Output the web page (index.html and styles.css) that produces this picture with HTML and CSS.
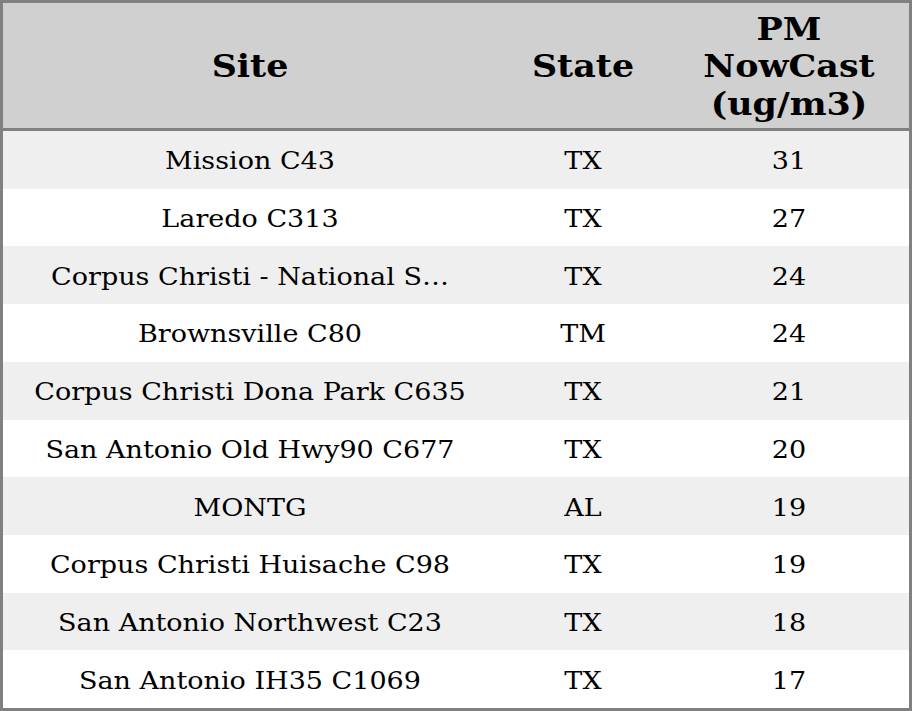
FILE: index.html
```html
<!DOCTYPE html>
<html>
<head>
<meta charset="utf-8">
<link rel="stylesheet" href="styles.css">
</head>
<body>
<div class="table">
  <div class="head">
    <div class="hcell">Site</div>
    <div class="hcell">State</div>
    <div class="hcell">PM<br>NowCast<br>(ug/m3)</div>
  </div>
  <div class="body">
    <div class="row"><div class="cell">Mission C43</div><div class="cell">TX</div><div class="cell">31</div></div>
    <div class="row"><div class="cell">Laredo C313</div><div class="cell">TX</div><div class="cell">27</div></div>
    <div class="row"><div class="cell">Corpus Christi - National S…</div><div class="cell">TX</div><div class="cell">24</div></div>
    <div class="row"><div class="cell">Brownsville C80</div><div class="cell">TM</div><div class="cell">24</div></div>
    <div class="row"><div class="cell">Corpus Christi Dona Park C635</div><div class="cell">TX</div><div class="cell">21</div></div>
    <div class="row"><div class="cell">San Antonio Old Hwy90 C677</div><div class="cell">TX</div><div class="cell">20</div></div>
    <div class="row"><div class="cell">MONTG</div><div class="cell">AL</div><div class="cell">19</div></div>
    <div class="row"><div class="cell">Corpus Christi Huisache C98</div><div class="cell">TX</div><div class="cell">19</div></div>
    <div class="row"><div class="cell">San Antonio Northwest C23</div><div class="cell">TX</div><div class="cell">18</div></div>
    <div class="row"><div class="cell">San Antonio IH35 C1069</div><div class="cell">TX</div><div class="cell">17</div></div>
  </div>
</div>
</body>
</html>
```
FILE: styles.css
```css
html, body {
  margin: 0;
  padding: 0;
  background: #ffffff;
}
.table {
  width: 912px;
  height: 711px;
  box-sizing: border-box;
  border: 3px solid #808080;
  font-family: "DejaVu Serif", serif;
  color: #000;
  display: flex;
  flex-direction: column;
}
.head {
  display: grid;
  grid-template-columns: 494px 172px 240px;
  height: 125px;
  box-sizing: content-box;
  border-bottom: 3px solid #808080;
  background: #d0d0d0;
  flex: none;
}
.hcell {
  display: flex;
  align-items: center;
  justify-content: center;
  text-align: center;
  font-weight: bold;
  font-size: 32px;
  line-height: 37.5px;
  padding-top: 3px;
  transform: scaleX(1.09);
}
.body {
  flex: 1;
  display: grid;
  grid-template-rows: repeat(10, 1fr);
}
.row {
  display: grid;
  grid-template-columns: 494px 172px 240px;
}
.row:nth-child(odd) {
  background: #efefef;
}
.cell {
  display: flex;
  align-items: center;
  justify-content: center;
  font-size: 25px;
  padding-top: 2px;
  white-space: nowrap;
  transform: scaleX(1.08);
}
```
